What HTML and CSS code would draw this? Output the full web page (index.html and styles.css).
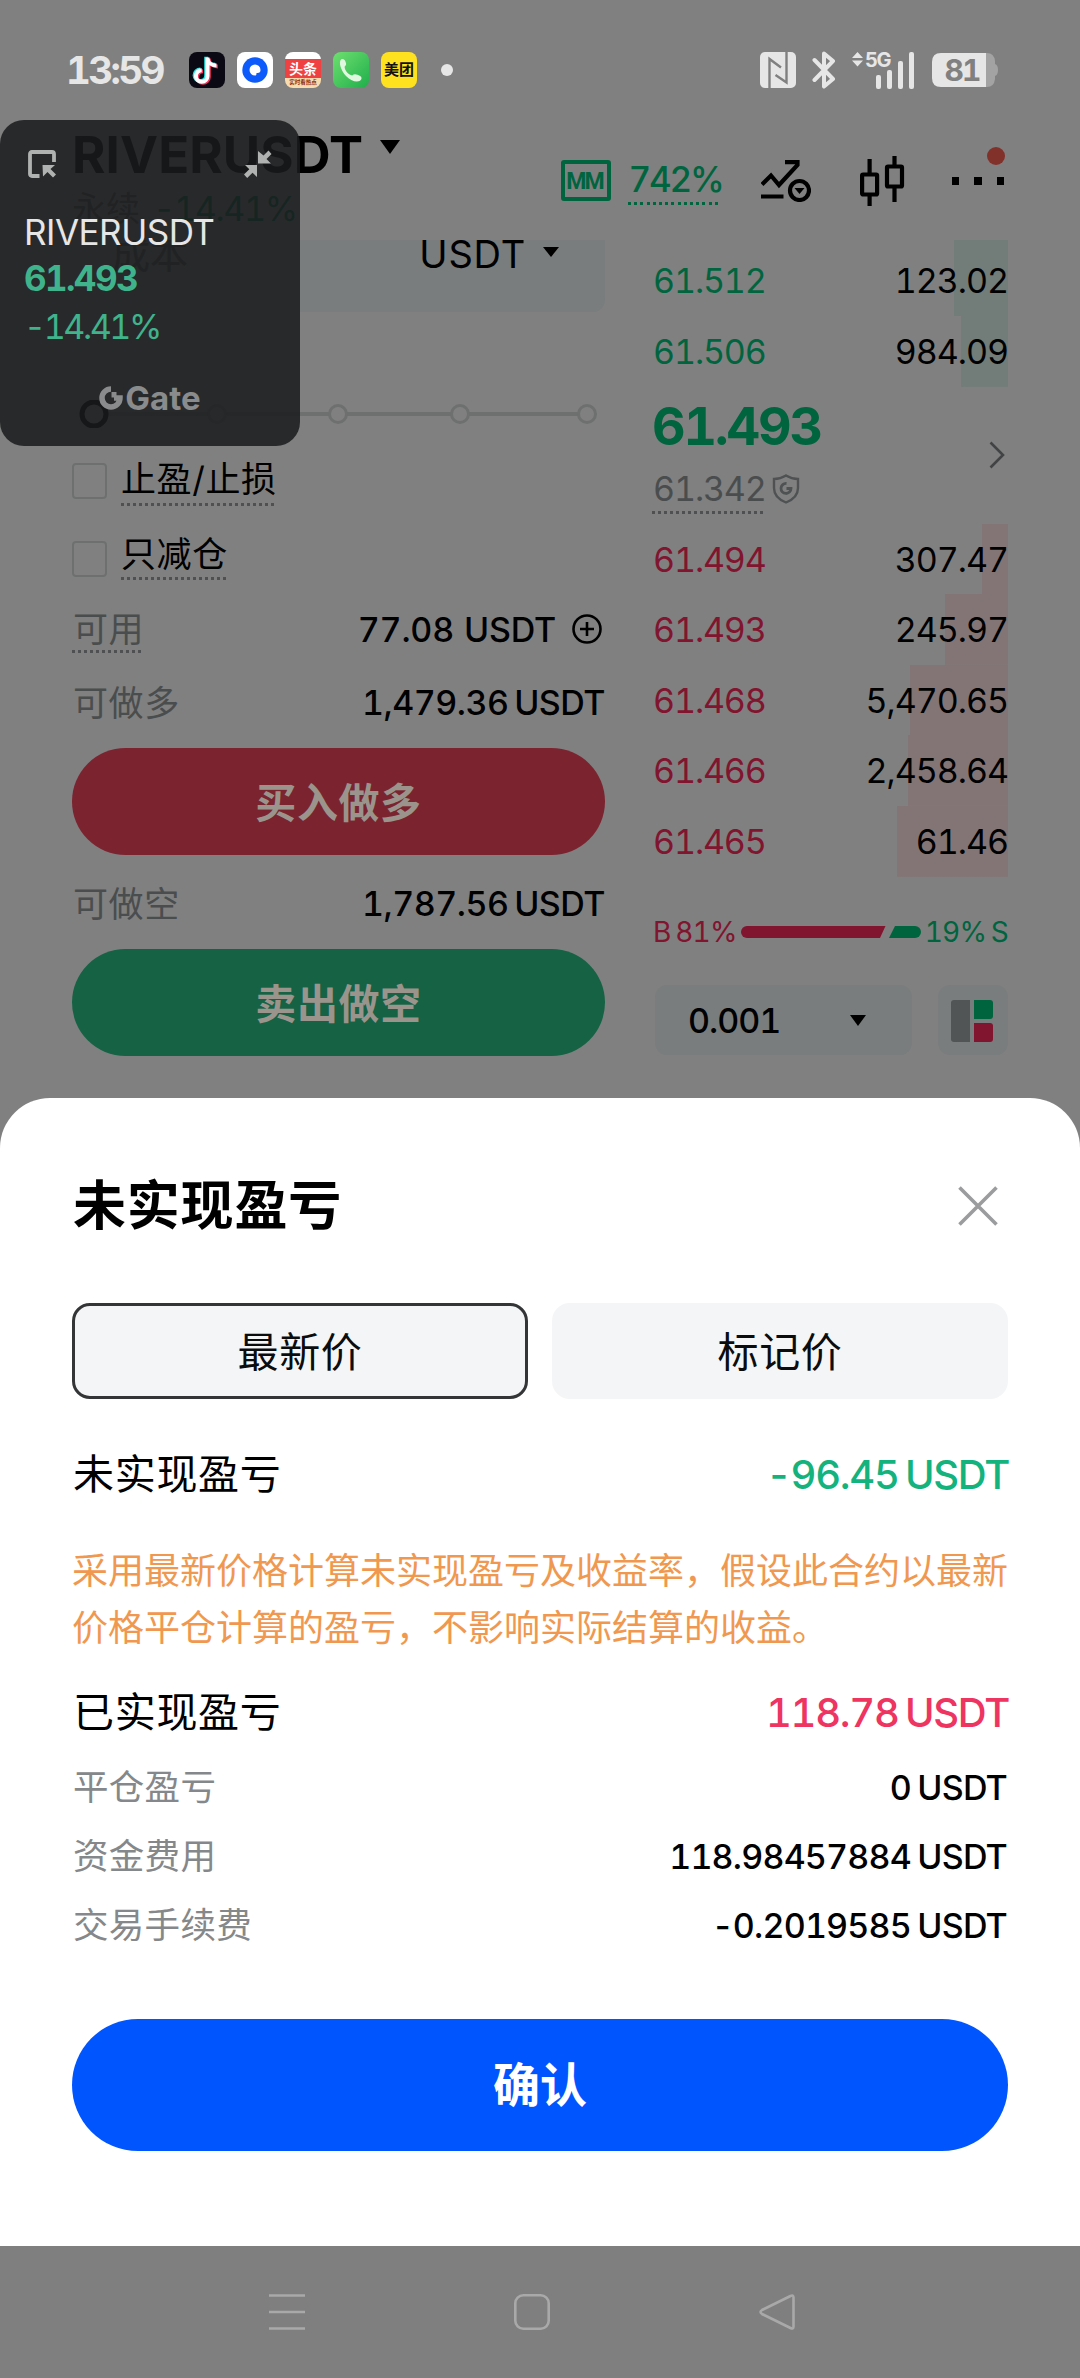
FILE: index.html
```html
<!DOCTYPE html>
<html lang="zh-CN">
<head>
<meta charset="utf-8">
<title>未实现盈亏</title>
<link rel="stylesheet" href="styles.css">
</head>
<body>
<div class="screen">
  <header class="status">
    <span class="clock">13:59</span>
    <div class="apps">
      <svg width="36" height="36" viewBox="0 0 36 36"><rect width="36" height="36" rx="8" fill="#0b0a14"/><g fill="none" stroke-width="4"><path d="M18 5.500V24a5.800 5.800 0 1 1-5.800-5.800M18 6.500c.5 4 4 7 9 7" stroke="#27e5e2" transform="translate(-.8 -.8)"/><path d="M18 5.500V24a5.800 5.800 0 1 1-5.800-5.800M18 6.500c.5 4 4 7 9 7" stroke="#f5315c" transform="translate(1.800 1)"/><path d="M18 5.500V24a5.800 5.800 0 1 1-5.800-5.800M18 6.500c.5 4 4 7 9 7" stroke="#fff" transform="translate(.5 0)"/></g></svg>
      <svg width="36" height="36" viewBox="0 0 36 36"><rect width="36" height="36" rx="8" fill="#fff"/><circle cx="18" cy="18" r="12.700" fill="#0d5bfa"/><path d="M18 12.500a5.500 5.500 0 1 0 0 11c1 0 1.500-.2 1.500-2.500 3 .3 4-.7 4-3a5.500 5.500 0 0 0-5.500-5.500z" fill="#fff"/></svg>
      <span class="app toutiao"><b>头条</b><i>实时看热点</i></span>
      <svg width="36" height="36" viewBox="0 0 36 36"><defs><linearGradient id="g" x1="0" y1="0" x2="1" y2="1"><stop offset="0" stop-color="#6fe070"/><stop offset="1" stop-color="#1fae4b"/></linearGradient></defs><rect width="36" height="36" rx="8" fill="url(#g)"/><path d="M8 7.500c2-1 3.500-.3 4.500 2.200 1 2.300.8 3.600-.8 4.800-.5 3.500 3.500 8 7.500 9 1.500-1.500 3-1.700 5.300-.7 3.500 1.300 4.700 2.500 3.800 4.500C26 31.500 18 29.500 13 24 7.500 18 5.500 10 8 7.500z" fill="#e2f7e0"/></svg>
      <span class="app meituan">美团</span>
    </div>
    <span class="more-dot"></span>
    <div class="signals">
      <svg width="36" height="36" viewBox="0 0 36 36"><rect width="36" height="36" rx="5" fill="#e6e6e6"/><g fill="none" stroke="#808080" stroke-width="2.400"><path d="M9.500 36V7l11.500 8.500M26.500 0v30.500L15.500 23"/></g></svg>
      <svg width="24" height="38" viewBox="0 0 24 38"><path d="M2.500 9l18.500 19-9 7.500V2.500L21 10 2.500 29" fill="none" stroke="#e6e6e6" stroke-width="4" stroke-linejoin="round" stroke-linecap="round"/></svg>
      <svg class="cell" width="64" height="38" viewBox="0 0 64 38"><g fill="#e6e6e6"><path d="M0 7l5.500-6L11 7zM0 9.500h11l-5.500 6z"/><text x="13" y="16" class="net">5G</text><rect x="24" y="24" width="5" height="14" rx="2"/><rect x="35" y="19" width="5" height="19" rx="2"/><rect x="46" y="10" width="5" height="28" rx="2"/><rect x="57" y="1" width="5" height="37" rx="2"/></g></svg>
      <svg width="66" height="34" viewBox="0 0 66 34"><path d="M54 0h1q7 0 8 8v3q3 1 3 6t-3 6v3q-1 8-8 8h-1z" fill="#a3a3a3"/><path d="M9 0H54V34H9Q0 34 0 25V9Q0 0 9 0z" fill="#e6e6e6"/><text x="30" y="28" text-anchor="middle" class="charge">81</text></svg>
    </div>
  </header>

  <section class="pair">
    <div class="pair-name">
      <h1>RIVERUSDT<svg width="20" height="14" viewBox="0 0 20 14"><path d="M0 0h20L10 14z"/></svg></h1>
      <p>永续 <span>-14.41%</span></p>
    </div>
    <div class="tools">
      <span class="mm">MM</span>
      <span class="pct">742%</span>
      <svg class="t-chart" width="50" height="42" viewBox="0 0 50 42"><g fill="none" stroke="#000" stroke-width="4.200"><path d="M1 24.500l9-9 8 9.500L36.500 5v-2.800H24M0 36.500h22.500"/><circle cx="38.500" cy="30.500" r="9.500"/></g><path d="M33.500 28h10l-5 6z"/></svg>
      <svg class="t-candle" width="46" height="50" viewBox="0 0 46 50"><g fill="none" stroke="#000" stroke-width="4.200"><rect x="2.100" y="18.500" width="15" height="20" rx="1"/><rect x="27" y="10.500" width="15" height="20" rx="1"/><path d="M9.600 3v15M9.600 39v11M34.500 0v10M34.500 31v15"/></g></svg>
      <span class="dots"><i></i><i></i><i></i></span>
    </div>
  </section>

  <main class="trade">
    <div class="form">
      <div class="cost"><span class="cost-name">成本</span><span class="cost-unit">USDT<svg width="16" height="10" viewBox="0 0 16 10"><path d="M0 0h16L8 10z"/></svg></span></div>
      <svg class="slider" width="533" height="28" viewBox="0 0 533 28"><path d="M22 14H515" stroke="#6e6f6f" stroke-width="4"/><g fill="#808080" stroke="#6e6f6f" stroke-width="3"><circle cx="145" cy="14" r="8.500"/><circle cx="266" cy="14" r="8.500"/><circle cx="388" cy="14" r="8.500"/><circle cx="515" cy="14" r="8.500"/></g><circle cx="22" cy="14" r="12" fill="#808080" stroke="#000" stroke-width="5"/></svg>
      <div class="check c1"><i></i><span class="dotted">止盈/止损</span></div>
      <div class="check c2"><i></i><span class="dotted">只减仓</span></div>
      <div class="line l1"><span class="dotted">可用</span><b class="wide">77.08 USDT<svg width="30" height="30" viewBox="0 0 30 30"><g fill="none" stroke="#000" stroke-width="2.600"><circle cx="15" cy="15" r="13.500"/><path d="M8 15h14M15 8v14"/></g></svg></b></div>
      <div class="line l2"><span>可做多</span><b>1,479.36 USDT</b></div>
      <button class="buy">买入做多</button>
      <div class="line l3"><span>可做空</span><b>1,787.56 USDT</b></div>
      <button class="sell">卖出做空</button>
    </div>

    <div class="book">
      <div class="row up first" style="--d:54px"><span>61.512</span><span>123.02</span></div>
      <div class="row up" style="--d:47px"><span>61.506</span><span>984.09</span></div>
      <div class="last">
        <div>
          <strong>61.493</strong>
          <p><span class="dotted">61.342</span><svg width="28" height="30" viewBox="0 0 28 30"><g fill="none" stroke="#4e5253" stroke-width="2.400"><path d="M14 1.500c4 2.500 8 3.500 12 3.500v9c0 7-4.500 11.500-12 14.500C6.500 25.500 2 21 2 14V5c4 0 8-1 12-3.500z"/><path d="M14.500 9.500a5 5 0 1 0 4.500 5h-4.500" stroke-width="2.800"/></g></svg></p>
        </div>
        <svg width="16" height="28" viewBox="0 0 16 28"><path d="M1.500 1.500L14 14 1.500 26.500" fill="none" stroke="#414344" stroke-width="2.600"/></svg>
      </div>
      <div class="row down" style="--d:26px"><span>61.494</span><span>307.47</span></div>
      <div class="row down" style="--d:63px"><span>61.493</span><span>245.97</span></div>
      <div class="row down" style="--d:98px"><span>61.468</span><span>5,470.65</span></div>
      <div class="row down" style="--d:100px"><span>61.466</span><span>2,458.64</span></div>
      <div class="row down" style="--d:111px"><span>61.465</span><span>61.46</span></div>
      <div class="ratio">
        <span class="b">B 81%</span>
        <svg width="180" height="12" viewBox="0 0 180 12"><path d="M6 0H144.500L139 12H6A6 6 0 0 1 6 0z" fill="#81142f"/><path d="M154 0H174a6 6 0 0 1 0 12H148z" fill="#00643f"/></svg>
        <span class="s">19% S</span>
      </div>
      <div class="depth">
        <div class="step"><span>0.001</span><svg width="16" height="11" viewBox="0 0 16 11"><path d="M0 0h16L8 11z"/></svg></div>
        <div class="view"><svg width="42" height="42" viewBox="0 0 42 42"><path d="M3 0H19V42H3Q0 42 0 39V3Q0 0 3 0z" fill="#525555"/><path d="M23 0H39Q42 0 42 3V16Q42 19 39 19H23z" fill="#00643f"/><path d="M23 23H39Q42 23 42 26V39Q42 42 39 42H23z" fill="#81142f"/></svg></div>
      </div>
    </div>
  </main>

  <section class="sheet">
    <div class="sheet-head"><h2>未实现盈亏</h2><svg width="40" height="40" viewBox="0 0 40 40"><path d="M1.500 1.500l37 37M38.500 1.500l-37 37" stroke="#9a9c9e" stroke-width="3.600" fill="none"/></svg></div>
    <div class="tabs"><button class="on">最新价</button><button>标记价</button></div>
    <div class="sum s1"><span>未实现盈亏</span><b class="green">-96.45 USDT</b></div>
    <p class="note">采用最新价格计算未实现盈亏及收益率，假设此合约以最新价格平仓计算的盈亏，不影响实际结算的收益。</p>
    <div class="sum s2"><span>已实现盈亏</span><b class="red">118.78 USDT</b></div>
    <div class="detail"><span>平仓盈亏</span><b>0 USDT</b></div>
    <div class="detail"><span>资金费用</span><b>118.98457884 USDT</b></div>
    <div class="detail"><span>交易手续费</span><b>-0.2019585 USDT</b></div>
    <button class="ok">确认</button>
  </section>

  <nav class="nav">
    <svg width="36" height="36" viewBox="0 0 36 36"><path d="M0 1.500h36M0 18h36M0 34.500h36"/></svg>
    <svg width="36" height="36" viewBox="0 0 36 36"><rect x="1.300" y="1.300" width="33.400" height="33.400" rx="8"/></svg>
    <svg width="36" height="36" viewBox="0 0 36 36"><path d="M34.500 3.500v29q0 3-3 1.500L3 20q-3-2 0-4L31.500 2q3-1.500 3 1.500z"/></svg>
  </nav>

  <aside class="float">
    <div class="float-top">
      <svg width="28" height="28" viewBox="0 0 28 28"><path d="M11.500 26H4Q2 26 2 24V4Q2 2 4 2H24Q26 2 26 4V12" fill="none" stroke="#b0b1b1" stroke-width="3.800"/><path d="M14.500 15H27l-4.500 4 5.500 5.500-3 3-5.500-5.500-4.500 4.500z" fill="#b0b1b1"/></svg>
      <svg width="28" height="28" viewBox="0 0 28 28"><path d="M14 1v12.500H27l-4.500-4.500 5-5-3-3.500-5 5zM13 27V15H1l4.300 4.300L0 24.500 3.200 28l5.300-5.300z" fill="#b0b1b1"/></svg>
    </div>
    <span class="f-name">RIVERUSDT</span>
    <b class="f-price">61.493</b>
    <span class="f-pct">-14.41%</span>
    <div class="gate"><svg width="24" height="24" viewBox="0 0 24 24"><path d="M12 3a9 9 0 1 0 9 9h-6" fill="none" stroke="#898b8c" stroke-width="5.500"/><path d="M12.500 6h5v5.500h-5z" fill="#898b8c"/></svg>Gate</div>
  </aside>
</div>
</body>
</html>
```
FILE: styles.css
```css
* { box-sizing: border-box; margin: 0; padding: 0; }
body {
  width: 1080px;
  background: #808080;
  color: #000;
  font-family: Inter, "Noto Sans CJK SC", sans-serif;
  font-feature-settings: "tnum";
}
button { border: 0; font-family: inherit; }
svg { display: block; flex: none; }
i { font-style: normal; }
.screen { position: relative; width: 1080px; height: 2378px; overflow: hidden; }

/* status bar */
.status { height: 120px; padding: 20px 82px 0 66px; display: flex; align-items: flex-start; line-height: 60px; }
.status > * { height: 100px; display: flex; align-items: center; }
.clock { width: 123px; font-size: 38.5px; font-weight: 700; letter-spacing: -2.6px; color: #e6e6e6; }
.apps { gap: 12px; }
.app { width: 36px; height: 36px; border-radius: 8px; overflow: hidden; }
.toutiao { background: linear-gradient(#fff 0 7px, #f04142 7px 26px, #f9dcae 26px); display: flex; flex-direction: column; align-items: center; padding-top: 8px; }
.toutiao b { font-size: 14px; line-height: 18px; color: #fff; }
.toutiao i { font-size: 5.5px; line-height: 9px; font-weight: 700; color: #8a2a10; white-space: nowrap; }
.meituan { background: #ffe21f; font-size: 15px; font-weight: 700; line-height: 35px; text-align: center; color: #111; }
.status .more-dot { width: 12px; height: 12px; border-radius: 50%; background: #e6e6e6; margin: 44px 0 0 24px; }
.signals { margin-left: auto; }
.signals svg + svg { margin-left: 16px; }
.net { font-size: 20px; font-weight: 700; letter-spacing: -1.5px; }
.charge { font-size: 30px; font-weight: 700; fill: #808080; letter-spacing: -2px; }

/* pair header */
.pair { height: 120px; padding: 0 72px; display: flex; justify-content: space-between; }
.pair h1 { display: flex; align-items: center; gap: 17px; height: 69px; font-size: 51px; font-weight: 700; letter-spacing: .1px; }
.pair h1 svg { margin-top: -16px; }
.pair p { height: 40px; line-height: 40px; font-size: 34px; color: #4e5051; }
.pair p span { color: #00643f; margin-left: 4px; letter-spacing: -1.3px; }
.tools { display: flex; align-items: flex-start; padding-top: 36px; }
.mm { width: 50px; height: 41px; margin-top: 4px; border: 4px solid #00643f; border-radius: 3px; color: #00643f; font-family: Roboto, Inter, sans-serif; font-size: 23px; font-weight: 700; line-height: 35px; text-align: center; letter-spacing: -2px; text-indent: -2px; }
.pct { margin: 4px 0 0 17px; width: 92px; height: 45px; line-height: 38px; font-size: 35px; font-weight: 500; letter-spacing: -2.2px; color: #00643f; text-align: left; padding-left: 1px; background: repeating-linear-gradient(90deg, #00643f 0 3px, transparent 3px 6.2px) bottom / 100% 3px no-repeat; }
.t-chart { margin: 4px 0 0 41px; }
.t-candle { margin-left: 49px; }
.dots { display: flex; gap: 15px; margin: 21px 4px 0 46px; position: relative; }
.dots i { width: 7.5px; height: 7.5px; background: #000; }
.dots::after { content: ""; position: absolute; right: -1px; top: -30px; width: 18px; height: 18px; border-radius: 50%; background: #82302a; }

/* trading area */
.trade { height: 858px; padding: 0 72px; display: grid; grid-template-columns: 533px 356px; column-gap: 47px; overflow: hidden; }
.form { display: flex; flex-direction: column; }
.cost { height: 72px; background: #797d7d; border-radius: 0 0 12px 12px; display: flex; justify-content: space-between; line-height: 28px; font-size: 38px; padding: 0 46px 0 40px; }
.cost-name { color: #4e5051; }
.cost-unit { display: flex; gap: 17px; letter-spacing: .8px; }
.cost-unit svg { margin-top: 7px; }
.slider { margin-top: 88px; }
.dotted { background: repeating-linear-gradient(90deg, #4e5051 0 3px, transparent 3px 6px) bottom / 100% 3px no-repeat; }
.check { height: 36px; display: flex; gap: 14px; align-items: flex-start; font-size: 35px; line-height: 34px; letter-spacing: .6px; }
.check i { width: 35px; height: 36px; border: 2.5px solid #6e7070; border-radius: 4px; }
.c1 { margin-top: 35px; }
.c1 .dotted { height: 44px; margin-top: -1px; }
.c2 { margin-top: 42px; }
.c2 .dotted { height: 43px; margin-top: -4px; }
.line { height: 34px; display: flex; justify-content: space-between; line-height: 34px; font-size: 35px; }
.line span { color: #4a4d4e; letter-spacing: .6px; padding-left: 1px; }
.line b { font-weight: 500; font-size: 34px; word-spacing: -3px; letter-spacing: -.5px; }
.line .dotted { height: 41px; margin-top: -1px; }
.line .wide { display: flex; gap: 16px; padding-right: 3px; word-spacing: 1px; letter-spacing: -.2px; }
.wide svg { margin-top: 1px; }
.l1 { margin-top: 36px; }
.l2 { margin-top: 39px; }
.l3 { margin-top: 32px; }
.buy, .sell { margin-top: 28px; height: 107px; padding-bottom: 3px; border-radius: 54px; font-size: 41px; font-weight: 700; letter-spacing: .6px; color: #9a948c; }
.buy { background: #7b2430; }
.sell { background: #166244; }

.row { height: 70.6px; display: flex; justify-content: space-between; line-height: 72px; font-size: 34px; letter-spacing: -1.1px; padding: 0 1px; }
.row span:last-child { letter-spacing: -1px; padding-right: 0; margin-right: -1px; }
.first { height: 76px; padding-top: 5px; }
.up { background: linear-gradient(#727c79, #727c79) right / var(--d) 100% no-repeat; }
.down { background: linear-gradient(#837575, #837575) right / var(--d) 100% no-repeat; }
.up span:first-child { color: #00643f; }
.down span:first-child { color: #81142f; }
.last { height: 137px; display: flex; justify-content: space-between; align-items: center; padding-right: 3px; }
.last > div { height: 137px; }
.last strong { display: block; height: 80px; line-height: 80px; font-size: 52px; letter-spacing: -2.2px; color: #00643f; }
.last p { display: flex; gap: 6px; font-size: 34px; letter-spacing: -1.1px; line-height: 35px; padding-top: 4px; color: #4a4d4e; }
.last .dotted { height: 43px; padding-left: 1px; }
.last p svg { margin-top: 3px; }
.ratio { height: 22px; margin-top: 44px; display: flex; justify-content: space-between; align-items: center; font-size: 28px; word-spacing: -2px; letter-spacing: -.8px; padding-left: 1px; }
.b { color: #81142f; }
.s { color: #00643f; }
.depth { margin-top: 42px; display: flex; justify-content: space-between; padding-left: 3px; }
.step { width: 257px; height: 70px; border-radius: 12px; background: #797d7d; display: flex; justify-content: space-between; align-items: center; padding: 2px 46px 0 33px; font-size: 34px; font-weight: 500; letter-spacing: -1px; }
.view { width: 70px; height: 70px; border-radius: 12px; background: #797d7d; padding: 15px 13px; }

/* bottom sheet */
.sheet { height: 1148px; padding: 72px 72px 0; background: #fff; border-radius: 50px 50px 0 0; }
.sheet-head { height: 72px; display: flex; justify-content: space-between; align-items: center; padding-right: 10px; }
.sheet-head h2 { font-size: 53px; line-height: 72px; font-weight: 700; letter-spacing: .8px; padding-left: 1px; }
.tabs { margin-top: 61px; display: grid; grid-template-columns: 1fr 1fr; gap: 24px; }
.tabs button { height: 96px; padding-bottom: 4px; border-radius: 18px; background: #f4f5f6; font-size: 41px; font-weight: 400; letter-spacing: .6px; color: #0b0c0d; }
.tabs .on { border: 3px solid #333537; }
.sum { height: 50px; display: flex; justify-content: space-between; line-height: 50px; font-size: 41px; }
.sum span { letter-spacing: .7px; padding-left: 1px; }
.sum b { font-weight: 500; font-size: 40px; letter-spacing: -1.3px; word-spacing: -3px; margin-right: -1px; line-height: 51px; }
.s1 { margin-top: 50px; }
.green { color: #14b27d; }
.red { color: #ee3461; }
.note { margin-top: 44px; font-size: 36px; line-height: 57px; color: #f0984f; }
.s2 { margin-top: 30px; }
.detail { height: 34px; margin-top: 35px; display: flex; justify-content: space-between; line-height: 33px; font-size: 35.5px; }
.s2 + .detail { margin-top: 34px; }
.detail span { color: #85888a; letter-spacing: .3px; padding-left: 1px; line-height: 34px; }
.detail b { font-weight: 500; font-size: 34px; letter-spacing: -.8px; word-spacing: -2px; padding-right: 1px; }
.ok { display: block; width: 100%; height: 132px; margin-top: 76px; padding-bottom: 8px; border-radius: 66px; background: #0055ff; color: #fff; font-size: 47px; font-weight: 700; }

.nav { height: 132px; padding: 48px 285px 0 269px; display: flex; justify-content: space-between; background: #7f7f7f; }
.nav svg { fill: none; stroke: #a9a9a9; stroke-width: 2.6; }

/* floating quote */
.float { position: absolute; left: 0; top: 120px; width: 300px; height: 326px; border-radius: 24px; background: rgba(26, 27, 28, .86); padding: 30px 24px 0; display: flex; flex-direction: column; }
.float-top { display: flex; justify-content: space-between; padding: 0 4px; }
.f-name { margin-top: 34px; height: 40px; line-height: 40px; font-size: 35px; letter-spacing: -.5px; color: #e6e6e6; }
.f-price { margin-top: 5px; height: 42px; line-height: 42px; font-size: 35px; letter-spacing: -1.6px; color: #3fb38c; }
.f-pct { margin-top: 7px; height: 42px; line-height: 42px; font-size: 34px; letter-spacing: -2.4px; color: #3fb38c; }
.gate { margin-top: 33px; height: 34px; display: flex; align-items: center; justify-content: center; gap: 2px; font-size: 33px; line-height: 34px; font-weight: 700; color: #898b8c; }
```
